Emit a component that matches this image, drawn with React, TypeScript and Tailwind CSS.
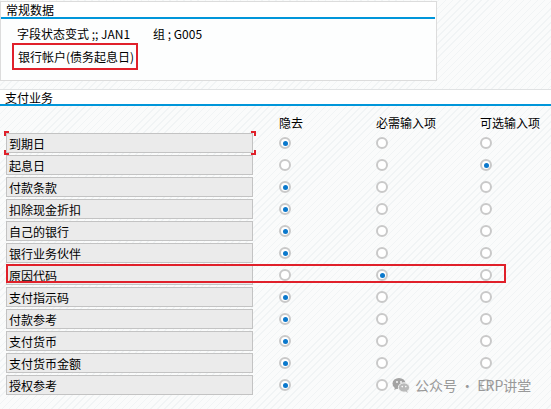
import React from "react";

const rows: { label: string; sel: number }[] = [
  { label: "到期日", sel: 0 },
  { label: "起息日", sel: 2 },
  { label: "付款条款", sel: 0 },
  { label: "扣除现金折扣", sel: 0 },
  { label: "自己的银行", sel: 0 },
  { label: "银行业务伙伴", sel: 0 },
  { label: "原因代码", sel: 1 },
  { label: "支付指示码", sel: 0 },
  { label: "付款参考", sel: 0 },
  { label: "支付货币", sel: 0 },
  { label: "支付货币金额", sel: 0 },
  { label: "授权参考", sel: 0 },
];

function Radio({ on }: { on: boolean }) {
  return (
    <div className="w-[12px] h-[12px] rounded-full border-2 border-[#c9c9c9] bg-white flex items-center justify-center">
      {on && <div className="w-[5px] h-[5px] rounded-full bg-[#0a78cc]" />}
    </div>
  );
}

function WeChat() {
  return (
    <svg width="18" height="16" viewBox="0 0 18 16">
      <ellipse cx="7" cy="6.5" rx="6.5" ry="5.5" fill="#9a9a9a" />
      <path d="M3 10.5 L2.2 13 L5.5 11.3 Z" fill="#9a9a9a" />
      <ellipse cx="12" cy="10.5" rx="5.6" ry="4.7" fill="#b3b3b3" stroke="#f7f8f8" strokeWidth="1" />
      <path d="M15 14 L16.2 15.8 L13 14.6 Z" fill="#b3b3b3" />
      <circle cx="5" cy="5" r="0.9" fill="#fff" />
      <circle cx="9" cy="5" r="0.9" fill="#fff" />
      <circle cx="10.2" cy="9.6" r="0.8" fill="#fff" />
      <circle cx="13.8" cy="9.6" r="0.8" fill="#fff" />
    </svg>
  );
}

export default function App() {
  return (
    <div
      className="relative w-[551px] h-[409px] overflow-hidden text-[12px] leading-none text-black bg-[repeating-linear-gradient(135deg,#f1f4f5_0px,#f1f4f5_1px,#fafbfb_1px,#fafbfb_5px)]"
      style={{ fontFamily: '"Noto Sans CJK SC", "Noto Sans", sans-serif' }}
    >
      {/* Top group */}
      <div className="pt-[1px] h-[89px]">
        <div className="w-[437px] h-[80px] border border-[#dcdcdc] bg-[#fdfefe]">
          <div className="h-[15px] bg-white pl-[5px] flex items-center">常规数据</div>
          <div className="h-[2px] bg-[#0096da] mr-[1px]" />
          <div className="pl-[16px] pt-[9px] flex items-center h-[21px]">
            <span>字段状态变式 ;; JAN1</span>
            <span className="ml-[23px]">组 ; G005</span>
          </div>
          <div className="ml-[11px] mt-[3px] w-[126px] h-[27px] border-2 border-[#e0202a] flex items-center pl-[4px]">
            银行帐户(债务起息日)
          </div>
        </div>
      </div>
      {/* Section header */}
      <div className="h-[1px] bg-[#e0e2e3]" />
      <div className="h-[14px] bg-white pl-[5px] flex items-end">支付业务</div>
      <div className="h-[2px] bg-[#0096da]" />
      {/* column headers */}
      <div className="flex h-[27px] pt-[11px] items-start">
        <div className="ml-[279px] w-[97px]">隐去</div>
        <div className="w-[104px]">必需输入项</div>
        <div>可选输入项</div>
      </div>
      <div className="flex flex-col gap-[2px]">
        {rows.map((r, i) => (
          <div key={i} className="relative flex items-center h-[20px]">
            <div className="ml-[6px] w-[247px] h-[20px] bg-[#ebebeb] border border-[#c3c3c3] flex items-center pl-[2px] pt-[1px]">
              {r.label}
            </div>
            <div className="ml-[26px] w-[97px]"><Radio on={r.sel === 0} /></div>
            <div className="w-[104px]"><Radio on={r.sel === 1} /></div>
            <div><Radio on={r.sel === 2} /></div>
            {i === 0 && (
              <>
                <div className="absolute left-[4px] top-[-2px] w-[5px] h-[5px] border-l-2 border-t-2 border-[#e0202a]" />
                <div className="absolute left-[251px] top-[-2px] w-[5px] h-[5px] border-r-2 border-t-2 border-[#e0202a]" />
                <div className="absolute left-[4px] top-[17px] w-[5px] h-[5px] border-l-2 border-b-2 border-[#e0202a]" />
                <div className="absolute left-[251px] top-[17px] w-[5px] h-[5px] border-r-2 border-b-2 border-[#e0202a]" />
              </>
            )}
            {i === 6 && (
              <div className="absolute left-[6px] top-[-1px] w-[500px] h-[19px] border-2 border-[#e0202a]" />
            )}
          </div>
        ))}
      </div>
      {/* watermark */}
      <div className="absolute left-[392px] top-[377px] flex items-center gap-[5px] text-[14px] text-[#8f8f8f] opacity-90">
        <WeChat />
        <span>公众号 · ERP讲堂</span>
      </div>
    </div>
  );
}
